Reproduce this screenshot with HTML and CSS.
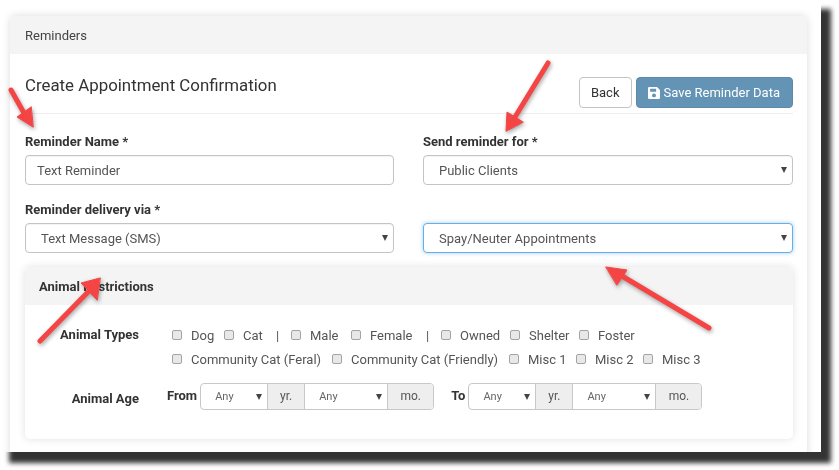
FILE: index.html
```html
<!DOCTYPE html>
<html lang="en">

<head>
    <meta charset="UTF-8">
    <meta name="viewport" content="width=device-width, initial-scale=1.0">
    <title>Reminders</title>
    <link rel="stylesheet" href="styles.css">
</head>

<body>
    <div class="frame">
        <div class="card">
            <div class="card-head">Reminders</div>
            <div class="card-body">
                <div class="title-row">
                    <h1>Create Appointment Confirmation</h1>
                    <div class="actions">
                        <button class="btn">Back</button>
                        <button class="btn btn-save">
                            <svg class="save-icon" viewBox="0 0 14 14" width="12" height="12">
                                <path fill="#fff" fill-rule="evenodd" d="M1.5 0H10.5L14 3.5V12.5A1.5 1.5 0 0 1 12.5 14H1.5A1.5 1.5 0 0 1 0 12.5V1.5A1.5 1.5 0 0 1 1.5 0ZM2.5 2V5.5H9.5V2ZM7 7.5A2.3 2.3 0 1 0 7 12.1A2.3 2.3 0 1 0 7 7.5Z" />
                            </svg>
                            Save Reminder Data
                        </button>
                    </div>
                </div>

                <div class="form-grid">
                    <div class="field">
                        <label>Reminder Name *</label>
                        <input class="control" type="text" value="Text Reminder">
                    </div>
                    <div class="field">
                        <label>Send reminder for *</label>
                        <div class="control select-box">Public Clients</div>
                    </div>
                    <div class="field">
                        <label>Reminder delivery via *</label>
                        <div class="control select-box">Text Message (SMS)</div>
                    </div>
                    <div class="field">
                        <label>&nbsp;</label>
                        <div class="control select-box focused">Spay/Neuter Appointments</div>
                    </div>
                </div>

                <div class="sub-card">
                    <div class="sub-head">Animal Restrictions</div>
                    <div class="sub-body">
                        <div class="types-row">
                            <div class="row-label">Animal Types</div>
                            <div class="check-lines">
                                <div class="check-line">
                                    <span class="check w-52"><input type="checkbox">Dog</span>
                                    <span class="check w-52"><input type="checkbox">Cat</span>
                                    <span class="sep">|</span>
                                    <span class="check w-60"><input type="checkbox">Male</span>
                                    <span class="check w-75"><input type="checkbox">Female</span>
                                    <span class="sep">|</span>
                                    <span class="check w-69"><input type="checkbox">Owned</span>
                                    <span class="check w-69"><input type="checkbox">Shelter</span>
                                    <span class="check"><input type="checkbox">Foster</span>
                                </div>
                                <div class="check-line">
                                    <span class="check w-160"><input type="checkbox">Community Cat (Feral)</span>
                                    <span class="check w-177"><input type="checkbox">Community Cat (Friendly)</span>
                                    <span class="check w-67"><input type="checkbox">Misc 1</span>
                                    <span class="check w-67"><input type="checkbox">Misc 2</span>
                                    <span class="check"><input type="checkbox">Misc 3</span>
                                </div>
                            </div>
                        </div>
                        <div class="age-row">
                            <div class="row-label">Animal Age</div>
                            <div class="age-part">
                                <b>From</b>
                                <div class="input-group">
                                    <div class="mini-select w-yr">Any</div>
                                    <div class="addon w-addon-yr">yr.</div>
                                    <div class="mini-select w-mo">Any</div>
                                    <div class="addon w-addon-mo">mo.</div>
                                </div>
                            </div>
                            <div class="age-part">
                                <b>To</b>
                                <div class="input-group">
                                    <div class="mini-select w-yr">Any</div>
                                    <div class="addon w-addon-yr">yr.</div>
                                    <div class="mini-select w-mo">Any</div>
                                    <div class="addon w-addon-mo">mo.</div>
                                </div>
                            </div>
                        </div>
                    </div>
                </div>
            </div>
        </div>

        <!-- red callout arrows drawn on top of the screenshot -->
        <svg class="arrows" width="821" height="452" viewBox="0 0 821 452">
            <g fill="#f44444" stroke="#f44444" stroke-linecap="round" stroke-linejoin="round">
                <path d="M11 90L24 113" stroke-width="5" fill="none" />
                <path d="M33 127L17 117L31 107Z" stroke-width="1" />
                <path d="M548 63L515 117" stroke-width="5" fill="none" />
                <path d="M506 131L507 112L523 122Z" stroke-width="1" />
                <path d="M40 341L89 291" stroke-width="5" fill="none" />
                <path d="M100 278L81 283L97 300Z" stroke-width="1" />
                <path d="M709 328L622 276" stroke-width="5" fill="none" />
                <path d="M606 267L627 270L617 285Z" stroke-width="1" />
            </g>
        </svg>
    </div>
</body>

</html>
```

FILE: styles.css
```css
* {
    margin: 0;
    padding: 0;
    box-sizing: border-box;
}

html,
body {
    height: 100%;
    overflow: hidden;
    background: #fff;
}

body {
    font-family: Roboto, "Liberation Sans", sans-serif;
    font-size: 13px;
    color: #333;
}

/* heavy drop shadow behind the screenshot frame */
body::before {
    content: "";
    position: absolute;
    left: 9px;
    top: 9px;
    width: 822px;
    height: 454px;
    background: #333;
    filter: blur(2.5px);
}

.frame {
    position: relative;
    width: 821px;
    height: 452px;
    padding: 16px 14px 0 10px;
    overflow: hidden;
    background: #fff;
}

.card {
    height: 460px;
    background: #fff;
    border-radius: 5px 5px 0 0;
    box-shadow: 0 0 8px rgba(0, 0, 0, .14);
    filter: blur(.3px);
}

.card-head {
    height: 38px;
    padding-left: 15px;
    line-height: 39px;
    color: #444;
    background: #f4f4f4;
    border-radius: 5px 5px 0 0;
}

.card-body {
    padding: 23px 14px 0 15px;
}

.title-row {
    display: flex;
    justify-content: space-between;
    padding-bottom: 5px;
    border-bottom: 1px solid #eee;
}

h1 {
    font-size: 16.85px;
    font-weight: 400;
    line-height: 17px;
}

.actions {
    display: flex;
    gap: 4px;
}

.btn {
    height: 31px;
    padding: 0 11px;
    font: 13px Roboto, "Liberation Sans", sans-serif;
    color: #333;
    background: #fff;
    border: 1px solid #c4c4c4;
    border-radius: 4px;
}

.btn-save {
    display: flex;
    align-items: center;
    gap: 4px;
    padding: 0 12px 0 11px;
    color: #fff;
    background: #6394b5;
    border-color: #5c8aa9;
}

.form-grid {
    display: grid;
    grid-template-columns: 369px 370px;
    column-gap: 29px;
    row-gap: 14px;
    margin-top: 17px;
}

.field label {
    display: block;
    height: 24px;
    font-weight: 700;
    line-height: 21px;
}

.control {
    display: block;
    width: 100%;
    height: 30px;
    padding: 0 11px;
    font: 13px Roboto, "Liberation Sans", sans-serif;
    line-height: 28px;
    color: #555;
    background: #fff;
    border: 1px solid #c4c4c4;
    border-radius: 4px;
    box-shadow: inset 0 1px 1px rgba(0, 0, 0, .05);
}

.select-box {
    position: relative;
    padding-left: 15px;
    line-height: 29px;
}

.select-box::after,
.mini-select::after {
    content: "";
    position: absolute;
    top: 50%;
    right: 5px;
    margin-top: -3px;
    border-top: 6px solid #444;
    border-left: 3px solid transparent;
    border-right: 3px solid transparent;
}

.focused {
    border-color: #66afe9;
    box-shadow: 0 0 4px rgba(102, 175, 233, .6);
}

.sub-card {
    height: 172px;
    margin-top: 14px;
    background: #fff;
    border-radius: 5px;
    box-shadow: 0 0 8px rgba(0, 0, 0, .12);
}

.sub-head {
    height: 38px;
    padding-left: 14px;
    font-weight: 700;
    line-height: 39px;
    background: #f4f4f4;
    border-radius: 5px 5px 0 0;
}

.sub-body {
    padding-top: 18px;
}

.types-row {
    display: flex;
}

.row-label {
    flex: none;
    width: 114px;
    font-weight: 700;
    line-height: 24px;
    text-align: right;
}

.check-lines {
    margin-left: 33px;
}

.check-line {
    display: flex;
    height: 24px;
    align-items: center;
    color: #555;
}

.check {
    display: flex;
    align-items: center;
    flex: none;
}

.check input {
    flex: none;
    width: 10px;
    height: 10px;
    margin-right: 9px;
    appearance: none;
    background: #e8e8e8;
    border: 1px solid #a4a4a4;
    border-radius: 2px;
}

.w-52 { width: 52px; }
.w-60 { width: 60px; }
.w-67 { width: 67px; }
.w-69 { width: 69px; }
.w-75 { width: 75px; }
.w-160 { width: 160px; }
.w-177 { width: 177px; }

.sep {
    flex: none;
    width: 15px;
}

.age-row {
    display: flex;
    align-items: flex-start;
    margin-top: 12px;
}

.age-row .row-label {
    margin-top: 4px;
}

.age-part {
    display: flex;
    align-items: center;
    gap: 3px;
    margin-left: 17px;
}

.age-row .age-part:nth-child(2) {
    margin-left: 28px;
}

.age-part b {
    margin-top: -2px;
}

.input-group {
    display: flex;
    height: 27px;
    font-size: 12px;
    color: #555;
    border: 1px solid #c8c8c8;
    border-radius: 4px;
}

.mini-select {
    position: relative;
    padding-left: 14px;
    font-size: 11px;
    line-height: 25px;
    color: #666;
}

.addon {
    line-height: 25px;
    text-align: center;
    background: #eee;
    border-left: 1px solid #c8c8c8;
    border-right: 1px solid #c8c8c8;
}

.w-addon-mo {
    border-right: 0;
    border-radius: 0 3px 3px 0;
}

.w-yr { width: 66px; }
.w-addon-yr { width: 38px; }
.w-mo { width: 82px; }
.w-addon-mo { width: 46px; }

/* overlay */
.arrows {
    position: absolute;
    left: 0;
    top: 0;
    filter: drop-shadow(1px 2px 2px rgba(0, 0, 0, .35));
}
```
